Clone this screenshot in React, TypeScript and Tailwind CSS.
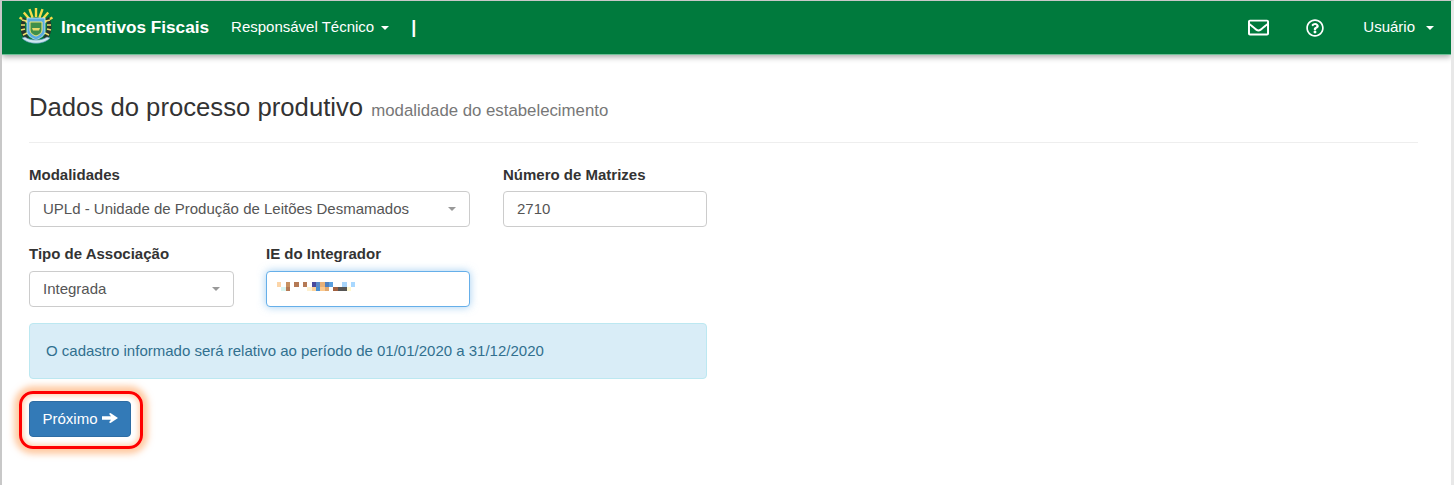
import { FaRegEnvelope, FaRegQuestionCircle } from 'react-icons/fa';

const mosaicTop = [
  'bg-[#fcd5a8]', '', 'bg-[#c89060]', '', 'bg-[#b57a55]', '', 'bg-[#b57a55]', '', 'bg-[#4a4a9c]',
  'bg-[#5a8ac8]', 'bg-[#e8b078]', 'bg-[#4d7fc0]', 'bg-[#5aa0e0]', '', '', 'bg-[#a8d5fb]', '', 'bg-[#a8d8ff]',
];
const mosaicBottom = [
  '', 'bg-[#d8f5f0]', 'bg-[#b57a55]', '', '', '', '', 'bg-[#fdf0cf]', 'bg-[#fcd19a]',
  'bg-[#4a8fd0]', 'bg-[#fcc88c]', 'bg-[#e0a870]', '', 'bg-[#a06040]', 'bg-[#555555]', 'bg-[#555555]', 'bg-[#fff8d0]', '',
];

function Crest() {
  const rays = [-60, -40, -20, 0, 20, 40, 60];
  return (
    <svg width="36" height="38" viewBox="0 0 36 38" className="shrink-0">
      {rays.map((r) => (
        <rect key={r} x="16.8" y="1" width="2.4" height="9" fill="#f6dc4a" transform={`rotate(${r} 18 20)`} />
      ))}
      <path d="M5 10 C1 18 2 28 8 33 L11 31 C7 26 6 18 8 12 Z" fill="#27352c" />
      <path d="M31 10 C35 18 34 28 28 33 L25 31 C29 26 30 18 28 12 Z" fill="#27352c" />
      <path d="M4 13 L8 14 M3 18 L7 18 M3 23 L7 22 M5 28 L9 26" stroke="#ecdf6a" strokeWidth="1.6" />
      <path d="M32 13 L28 14 M33 18 L29 18 M33 23 L29 22 M31 28 L27 26" stroke="#ecdf6a" strokeWidth="1.6" />
      <path d="M9 11 H27 V24 C27 29 22 31 18 33 C14 31 9 29 9 24 Z" fill="#58abe0" stroke="#d8e8f0" strokeWidth="0.8" />
      <path d="M12 15 H24 V23 C24 26 21 28 18 29 C15 28 12 26 12 23 Z" fill="#3f8f4a" stroke="#f1e77a" strokeWidth="1" />
      <path d="M14 21 H22 L21 23.5 H15 Z" fill="#e8d96a" />
      <path d="M4 31 C10 38 26 38 32 31 L29 30 C24 34 12 34 7 30 Z" fill="#cfe6ee" stroke="#4d93b8" strokeWidth="0.6" />
    </svg>
  );
}

function Caret({ className }: { className: string }) {
  return <span className={`inline-block h-0 w-0 border-x-4 border-t-4 border-x-transparent ${className}`} />;
}

function SelectBox({ value, className }: { value: string; className: string }) {
  return (
    <div className={`flex h-9 items-center justify-between rounded border border-[#ccc] bg-white pl-[13px] pr-[13px] text-[#555] ${className}`}>
      <span>{value}</span>
      <Caret className="border-t-[#999]" />
    </div>
  );
}

export default function App() {
  return (
    <div className="h-[485px] w-[1454px] overflow-hidden border-t border-r-[3px] border-l-2 border-t-[#c8c8c8] border-r-[#e8e8e8] border-l-[#c8c8c8] bg-white font-['Liberation_Sans',Arial,sans-serif] text-[15px] text-[#333]">
      <nav className="flex h-[54px] w-[1449px] items-center justify-between border-b border-[#6fbf97] bg-[#007a3d] text-white shadow-[0_2px_6px_rgba(0,0,0,0.35)]">
        <div className="flex items-center">
          <div className="ml-[16px] mb-[4px]"><Crest /></div>
          <span className="ml-[7px] text-[17.2px] font-bold">Incentivos Fiscais</span>
          <span className="ml-[22px]">Responsável Técnico</span>
          <Caret className="ml-[7px] border-t-white" />
          <span className="ml-[22px] text-[18px] font-bold">|</span>
        </div>
        <div className="flex items-center">
          <FaRegEnvelope className="text-[21px]" />
          <FaRegQuestionCircle className="ml-[37px] text-[18px]" />
          <span className="ml-[39px]">Usuário</span>
          <Caret className="ml-[11px] mr-[17px] border-t-white" />
        </div>
      </nav>

      <main className="pl-[27px] pr-[33px]">
        <div className="mt-[39px] border-b border-[#eee] pb-[18px]">
          <h1 className="text-[25.7px] leading-[27px] text-[#333]">
            Dados do processo produtivo <small className="ml-[1px] text-[16.8px] text-[#777]">modalidade do estabelecimento</small>
          </h1>
        </div>

        <div className="mt-[22px] flex gap-[33px]">
          <div className="w-[441px]">
            <label className="mb-[6px] block h-[20px] font-bold leading-5">Modalidades</label>
            <SelectBox value="UPLd - Unidade de Produção de Leitões Desmamados" className="w-full" />
          </div>
          <div className="w-[204px]">
            <label className="mb-[6px] block h-[20px] font-bold leading-5">Número de Matrizes</label>
            <div className="flex h-9 items-center rounded border border-[#ccc] bg-white px-[13px] pt-px text-[#555]">2710</div>
          </div>
        </div>

        <div className="mt-[17px] flex gap-[32px]">
          <div className="w-[205px]">
            <label className="mb-[7px] block h-[20px] font-bold leading-5">Tipo de Associação</label>
            <SelectBox value="Integrada" className="w-full" />
          </div>
          <div className="w-[204px]">
            <label className="mb-[7px] block h-[20px] font-bold leading-5">IE do Integrador</label>
            <div className="flex h-9 flex-col justify-center rounded border border-[#66afe9] bg-white pb-[5px] pl-[10px] shadow-[0_0_8px_rgba(102,175,233,0.6)]">
              <div className="flex">
                {mosaicTop.map((c, i) => <span key={i} className={`h-[4.35px] w-[4.35px] ${c}`} />)}
              </div>
              <div className="flex">
                {mosaicBottom.map((c, i) => <span key={i} className={`h-[4.35px] w-[4.35px] ${c}`} />)}
              </div>
            </div>
          </div>
        </div>

        <div className="mt-[16px] flex h-[56px] w-[678px] items-center rounded border border-[#bce8f1] bg-[#d9edf7] px-[16px] text-[#31708f]">
          O cadastro informado será relativo ao período de 01/01/2020 a 31/12/2020
        </div>

        <div className="relative mt-[22px] w-[102px]">
          <button className="flex h-9 w-[102px] items-center justify-center gap-1 rounded border border-[#2e6da4] bg-[#337ab7] text-white">
            Próximo
            <svg width="16" height="10" viewBox="0 0 16 10" fill="white" className="mb-[2px]">
              <path d="M0 3.2 H9 L7 0.8 L8.5 0 L16 5 L8.5 10 L7 9.2 L9 6.8 H0 Z" />
            </svg>
          </button>
          <div className="absolute -top-[10px] -left-[10px] h-[58px] w-[124px] rounded-[14px] border-[3px] border-[#ff0000] shadow-[0_0_6px_5px_rgba(255,150,70,0.5),inset_0_0_5px_2px_rgba(255,150,70,0.4)]" />
        </div>
      </main>
    </div>
  );
}
